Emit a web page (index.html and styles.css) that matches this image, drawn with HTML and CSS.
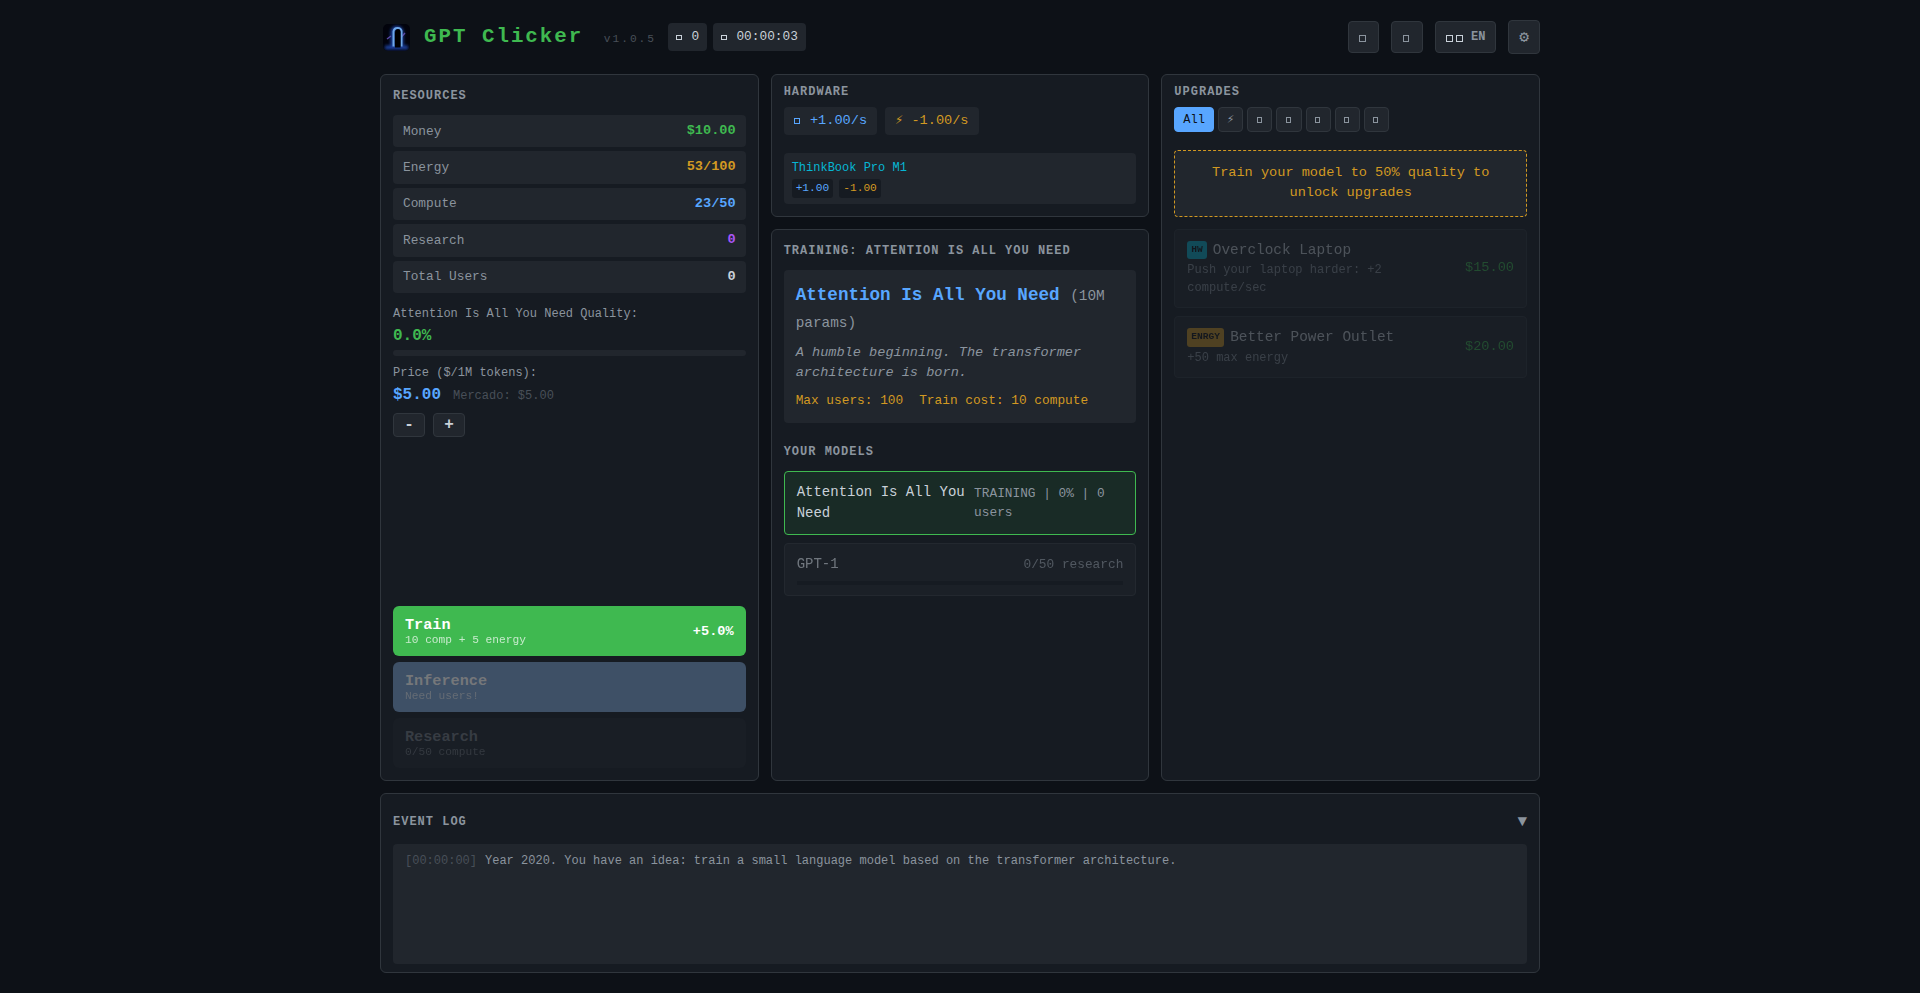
FILE: index.html
```html
<!DOCTYPE html>
<html lang="en">
<head>
<meta charset="utf-8">
<title>GPT Clicker</title>
<link rel="stylesheet" href="styles.css">
</head>
<body>
<div class="app">
  <header class="header">
    <div class="brand">
      <svg class="logo" viewBox="0 0 27 27">
        <defs>
          <filter id="glow" x="-50%" y="-50%" width="200%" height="200%"><feGaussianBlur stdDeviation="1.5"/></filter>
          <filter id="soft" x="-50%" y="-50%" width="200%" height="200%"><feGaussianBlur stdDeviation="0.5"/></filter>
          <clipPath id="round"><rect width="27" height="27" rx="5"/></clipPath>
        </defs>
        <g clip-path="url(#round)">
          <rect width="27" height="27" fill="#02030c"/>
          <path d="M2 23.500H25M9.500 23V8Q10 4 14 4Q18 4 18.500 8V23" fill="none" stroke="#1a3f9c" stroke-width="4" filter="url(#glow)"/>
          <path d="M4 15L8 12M18.500 13L22 9" stroke="#5b4aa8" stroke-width="1.4" filter="url(#soft)"/>
          <path d="M10.500 22.500V7.500Q11 4 14.500 4Q18 4 18.500 7V22.500" fill="none" stroke="#6ea8e8" stroke-width="2" filter="url(#soft)"/>
          <path d="M12 23.500V9Q12.500 5 15 5Q17.600 5 17.600 8V23.500Z" fill="#000"/>
          <path d="M7.500 23H11.500M18 23H21" stroke="#8cc4ff" stroke-width="1" filter="url(#soft)"/>
        </g>
      </svg>
      <h1 class="title">GPT Clicker <span class="version">v1.0.5</span></h1>
      <div class="badges">
        <span class="badge"><i class="box"></i> 0</span>
        <span class="badge"><i class="box"></i> 00:00:03</span>
      </div>
    </div>
    <div class="tools">
      <button class="tool"><i class="box"></i></button>
      <button class="tool"><i class="box"></i></button>
      <button class="tool lang"><span class="flag"><i class="box"></i><i class="box"></i></span><span class="code">EN</span></button>
      <button class="tool">⚙</button>
    </div>
  </header>

  <main class="columns">
    <section class="panel resources">
      <h2 class="heading">Resources</h2>
      <div class="rows">
        <div class="row"><span>Money</span><b class="green">$10.00</b></div>
        <div class="row"><span>Energy</span><b class="orange">53/100</b></div>
        <div class="row"><span>Compute</span><b class="blue">23/50</b></div>
        <div class="row"><span>Research</span><b class="purple">0</b></div>
        <div class="row"><span>Total Users</span><b class="light">0</b></div>
      </div>
      <div class="label">Attention Is All You Need Quality:</div>
      <div class="big green">0.0%</div>
      <div class="meter"></div>
      <div class="label">Price ($/1M tokens):</div>
      <div class="price"><span class="big blue">$5.00</span><span class="market">Mercado: $5.00</span></div>
      <div class="steps"><button class="step">-</button><button class="step">+</button></div>
      <div class="actions">
        <button class="action train"><span><span class="name">Train</span><span class="cost">10 comp + 5 energy</span></span><span class="gain">+5.0%</span></button>
        <button class="action inference"><span><span class="name">Inference</span><span class="cost">Need users!</span></span></button>
        <button class="action research"><span><span class="name">Research</span><span class="cost">0/50 compute</span></span></button>
      </div>
    </section>

    <div class="middle">
      <section class="panel compact">
        <h2 class="heading">Hardware</h2>
        <div class="chips"><span class="chip blue"><i class="box"></i> +1.00/s</span><span class="chip orange">⚡ -1.00/s</span></div>
        <div class="device">
          <div class="device-name">ThinkBook Pro M1</div>
          <div class="device-tags"><span class="rate blue">+1.00</span><span class="rate orange">-1.00</span></div>
        </div>
      </section>
      <section class="panel models">
        <h2 class="heading">Training: Attention Is All You Need</h2>
        <div class="current">
          <div class="model-title">Attention Is All You Need <span class="params">(10M params)</span></div>
          <p class="desc">A humble beginning. The transformer architecture is born.</p>
          <div class="stats"><span>Max users: 100</span><span>Train cost: 10 compute</span></div>
        </div>
        <h2 class="heading">Your Models</h2>
        <div class="model active">
          <div class="model-line"><span>Attention Is All You Need</span><span class="status">TRAINING | 0% | 0 users</span></div>
        </div>
        <div class="model locked">
          <div class="model-line"><span>GPT-1</span><span class="status">0/50 research</span></div>
          <div class="progress"></div>
        </div>
      </section>
    </div>

    <section class="panel compact">
      <h2 class="heading">Upgrades</h2>
      <div class="filters">
        <button class="filter selected">All</button>
        <button class="filter">⚡</button>
        <button class="filter"><i class="box"></i></button>
        <button class="filter"><i class="box"></i></button>
        <button class="filter"><i class="box"></i></button>
        <button class="filter"><i class="box"></i></button>
        <button class="filter"><i class="box"></i></button>
      </div>
      <div class="notice">Train your model to 50% quality to unlock upgrades</div>
      <div class="upgrade">
        <div class="upgrade-info">
          <div class="upgrade-name"><span class="tag hw">HW</span>Overclock Laptop</div>
          <div class="upgrade-desc">Push your laptop harder: +2 compute/sec</div>
        </div>
        <span class="upgrade-price">$15.00</span>
      </div>
      <div class="upgrade">
        <div class="upgrade-info">
          <div class="upgrade-name"><span class="tag energy">ENRGY</span>Better Power Outlet</div>
          <div class="upgrade-desc">+50 max energy</div>
        </div>
        <span class="upgrade-price">$20.00</span>
      </div>
    </section>
  </main>

  <section class="panel events">
    <div class="events-head"><h2 class="heading">Event Log</h2><span class="arrow">▼</span></div>
    <div class="log"><span class="time">[00:00:00]</span>Year 2020. You have an idea: train a small language model based on the transformer architecture.</div>
  </section>
</div>
</body>
</html>
```
FILE: styles.css
```css
* { box-sizing: border-box; margin: 0; padding: 0; }
body {
  background: #0d1117;
  color: #c9d1d9;
  font-family: "Liberation Mono", monospace;
  font-size: 14px;
  line-height: 1.5;
}
button { font-family: inherit; color: inherit; }

.green { color: #3fb950; }
.orange { color: #d29922; }
.blue { color: #58a6ff; }
.purple { color: #a855f7; }
.light { color: #c9d1d9; }

/* hollow square, one monospace cell wide */
.box {
  display: inline-block;
  width: .42em;
  height: .42em;
  margin: 0 .15em 0 .03em;
  border: 1px solid currentColor;
}

.app {
  width: 1160px;
  height: 993px;
  margin: 0 auto;
  padding: 20px 0;
  display: flex;
  flex-direction: column;
}

.header {
  height: 34px;
  margin-bottom: 20px;
  display: flex;
  justify-content: space-between;
  align-items: center;
}
.brand { display: flex; align-items: center; }
.logo { width: 27px; height: 27px; margin: 0 14px 0 3px; }
.title {
  color: #3fb950;
  font-size: 20.8px;
  letter-spacing: 2px;
  white-space: nowrap;
}
.version { color: #484f58; font-size: 11.2px; font-weight: normal; margin-left: 6px; }
.badges { display: flex; gap: 6px; margin-left: 12px; }
.badge { background: #21262d; border-radius: 4px; padding: 4px 8px; font-size: 12.8px; white-space: nowrap; }
.tools { display: flex; align-items: center; gap: 12px; }
.tool {
  background: #21262d;
  border: 1px solid #30363d;
  border-radius: 4px;
  color: #8b949e;
  font-size: 16px;
  padding: 6px 10px;
}
.tool .box { vertical-align: -1px; }
.lang { display: flex; align-items: center; gap: 6px; }
.flag { color: #c9d1d9; }
.code { font-size: 12px; font-weight: bold; padding-bottom: 1px; }

.columns {
  flex: 1;
  min-height: 0;
  display: grid;
  grid-template-columns: repeat(3, minmax(0, 1fr));
  gap: 12px;
}
.panel { background: #161b22; border: 1px solid #30363d; border-radius: 6px; padding: 12px; }
.compact { padding-top: 8px; }
.compact .heading { margin-bottom: 6px; }
.heading {
  color: #8b949e;
  font-size: 12px;
  letter-spacing: 1px;
  text-transform: uppercase;
  margin-bottom: 10px;
}

.resources { display: flex; flex-direction: column; }
.rows { display: flex; flex-direction: column; gap: 4px; margin-bottom: 12px; }
.row {
  display: flex;
  justify-content: space-between;
  align-items: center;
  background: #21262d;
  border-radius: 4px;
  padding: 6px 10px;
  color: #8b949e;
  font-size: 12.8px;
}
.row b { font-size: 13.6px; }
.label { color: #8b949e; font-size: 12px; }
.big { font-size: 16px; font-weight: bold; line-height: 26px; }
.meter { height: 6px; margin: 1px 0 8px; border-radius: 3px; background: #21262d; }
.price { display: flex; align-items: baseline; gap: 12px; }
.market { color: #484f58; font-size: 12px; }
.steps { display: flex; gap: 8px; margin-top: 5px; }
.step {
  width: 32px;
  height: 24px;
  background: #21262d;
  border: 1px solid #30363d;
  border-radius: 4px;
  font-size: 16px;
  font-weight: bold;
}
.actions { display: flex; flex-direction: column; gap: 6px; margin-top: auto; }
.action {
  display: flex;
  justify-content: space-between;
  align-items: center;
  height: 50px;
  padding: 10px 12px;
  border: 0;
  border-radius: 6px;
  text-align: left;
}
.name { display: block; font-size: 15.2px; font-weight: bold; }
.cost { display: block; font-size: 11.2px; opacity: .7; }
.gain { font-size: 13.6px; font-weight: bold; }
.train { background: #3fb950; color: #fff; }
.inference { background: #3e5066; color: #75777a; }
.research { background: #191e25; color: #373c43; }
.research .cost { opacity: .9; }

.middle { display: flex; flex-direction: column; gap: 12px; }
.models { flex: 1; }
.chips { display: flex; gap: 8px; margin-bottom: 18px; }
.chip { height: 28px; padding: 4px 10px; background: #21262d; border-radius: 4px; font-size: 13.6px; }
.device { background: #21262d; border-radius: 4px; padding: 6px 8px; }
.device-name { color: #06b6d4; font-size: 12px; }
.device-tags { display: flex; gap: 6px; margin-top: 2px; }
.rate { background: #161b22; border-radius: 3px; padding: 1px 4px; font-size: 11.2px; }

.current { background: #21262d; border-radius: 4px; padding: 12px; margin-bottom: 20px; }
.model-title { color: #58a6ff; font-size: 17.6px; font-weight: bold; line-height: 1.53; margin-bottom: 7px; }
.params { color: #8b949e; font-size: 14.4px; font-weight: normal; }
.desc { color: #8b949e; font-size: 13.6px; font-style: italic; margin-bottom: 8px; }
.stats { display: flex; gap: 16px; color: #d29922; font-size: 12.8px; }
.model { border: 1px solid #30363d; border-radius: 4px; padding: 10px 12px; margin-bottom: 8px; background: #21262d; }
.active { border-color: #3fb950; background: rgba(63, 185, 80, .1); }
.locked { opacity: .5; }
.model-line { display: flex; justify-content: space-between; align-items: center; }
.status { color: #8b949e; font-size: 12.8px; padding-top: 1px; }
.progress { height: 4px; margin-top: 6px; background: #161b22; }

.filters { display: flex; gap: 4px; height: 25px; margin-bottom: 18px; }
.filter {
  background: #21262d;
  border: 1px solid #30363d;
  border-radius: 4px;
  color: #8b949e;
  font-size: 12px;
  padding: 4px 8px;
}
.selected { background: #58a6ff; border-color: #58a6ff; color: #0d1117; }
.notice {
  border: 1px dashed #d29922;
  border-radius: 4px;
  background: #21262d;
  color: #d29922;
  font-size: 13.6px;
  text-align: center;
  padding: 12px;
  margin-bottom: 12px;
}
.upgrade {
  display: flex;
  justify-content: space-between;
  align-items: center;
  background: #21262d;
  border: 1px solid #30363d;
  border-radius: 4px;
  padding: 10px 12px;
  margin-bottom: 8px;
  opacity: .3;
}
.upgrade-name { font-size: 14.4px; }
.upgrade-desc { color: #8b949e; font-size: 12px; }
.upgrade-price { color: #3fb950; font-size: 13.6px; }
.tag {
  display: inline-block;
  vertical-align: middle;
  margin-right: 6px;
  padding: 2px 4px;
  border-radius: 3px;
  color: #0d1117;
  font-size: 9.6px;
  font-weight: bold;
}
.hw { background: #06b6d4; }
.energy { background: #d29922; }

.events { height: 180px; margin-top: 12px; padding: 8px 12px; }
.events-head { display: flex; justify-content: space-between; align-items: center; height: 40px; margin-bottom: 2px; }
.events-head .heading { margin: 0; }
.arrow { color: #8b949e; font-size: 16px; }
.log { height: 120px; padding: 8px 12px; background: #21262d; border-radius: 4px; color: #8b949e; font-size: 12px; }
.time { color: #484f58; margin-right: 8px; }
```
